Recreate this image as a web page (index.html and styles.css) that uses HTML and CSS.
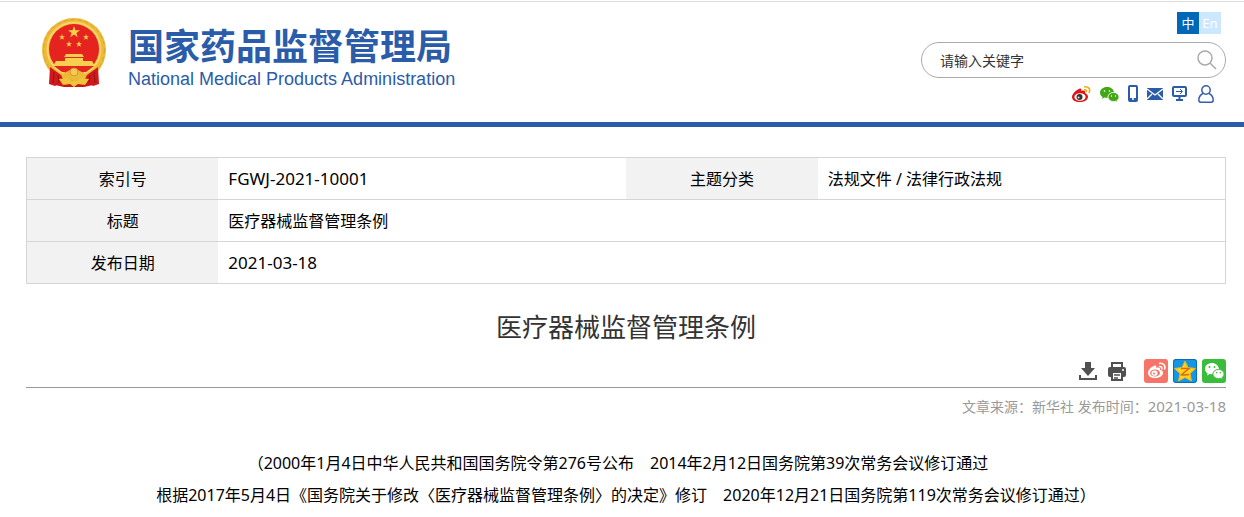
FILE: index.html
```html
<!DOCTYPE html>
<html lang="zh-CN">
<head>
<meta charset="utf-8">
<meta name="viewport" content="width=device-width, initial-scale=1">
<title>医疗器械监督管理条例</title>
<link rel="stylesheet" href="styles.css">
</head>
<body>
<header class="site-header">
  <a class="brand" href="#">
    <svg class="emblem" viewBox="0 0 66 72" aria-hidden="true">
      <path d="M14 52h38v16l-9 2H23l-9-2z" fill="#c9161b"/>
      <circle cx="33" cy="33" r="32" fill="#ecb93a"/>
      <circle cx="33" cy="33" r="30.500" fill="none" stroke="#dfa52c" stroke-dasharray="4 3"/>
      <circle cx="33" cy="32" r="26.500" fill="none" stroke="#f7d566" stroke-width="2"/>
      <circle cx="33" cy="32" r="25" fill="#e5231f"/>
      <g fill="#f5cf4d">
        <path d="m33 9 1.500 4.200h4.500l-3.600 2.700 1.300 4.300-3.700-2.600-3.700 2.600 1.300-4.300-3.600-2.700h4.500z"/>
        <path id="star" d="m21 17 .8 2.200h2.200l-1.800 1.400.7 2.200-1.900-1.300-1.900 1.300.7-2.200-1.800-1.400h2.200z"/>
        <use href="#star" x="24"/><use href="#star" x="7" y="7"/><use href="#star" x="17" y="7"/>
        <path d="M25 37h16l2 3H23zM24 41h18v3H24zM15 44h36l3 5H12z"/>
      </g>
      <path d="M13 49h40l-8 6H21z" fill="#e5231f"/>
      <path d="m9 50 13 7 5-3 6-3 6 3 5 3 13-7-5 8-9 4-10-3-10 3-9-4z" fill="#eeb938"/>
      <path d="m9 50-1 17 6 2 3-2 3 2 3-5-3-6zM57 50l1 17-6 2-3-2-3 2-3-5 3-6z" fill="#cf191b"/>
      <path d="m13 55-1 11m5-8 1 8m35-11 1 11m-5-8-1 8" stroke="#9c1015"/>
      <path d="m18 62 8-1 5 3h4l5-3 8 1-4 6-7-1-4 3-4-3-7 1z" fill="#f0c33b"/>
      <circle cx="33" cy="55" r="4" fill="#f3cb52" stroke="#d19628"/>
    </svg>
    <span class="brand-text">
      <span class="brand-cn">国家药品监督管理局</span>
      <span class="brand-en">National Medical Products Administration</span>
    </span>
  </a>
  <div class="tools">
    <nav class="languages" aria-label="语言">
      <a class="language language-on" href="#">中</a>
      <a class="language" href="#">En</a>
    </nav>
    <form class="search">
      <input class="search-input" type="text" aria-label="搜索" placeholder="请输入关键字">
      <button class="search-button" type="button" aria-label="搜索">
        <svg width="20" height="20" viewBox="0 0 20 20" fill="none" stroke="#aaa" stroke-width="1.500"><circle cx="8" cy="8" r="7"/><path d="m13 13 6 6"/></svg>
      </button>
    </form>
    <nav class="quick-links" aria-label="快捷入口">
      <a class="icon-link" href="#" aria-label="微博"><svg width="19" height="18" viewBox="0 0 19 18"><path d="M7 4c2-1 3 0 2 2 3-1 5 0 4 2 2 1 3 2 3 4 0 3-4 5-8 5-5 0-8-2-8-5 0-3 4-7 7-8z" fill="#df1418"/><ellipse cx="8" cy="12" rx="5.600" ry="3.800" fill="#fff"/><circle cx="7.500" cy="12" r="3" fill="#333"/><circle cx="6.600" cy="12.500" r="1" fill="#ddd"/><path d="M12 2c4-1 7 2 5 6m-5-3c2-1 3 1 2 2" fill="none" stroke="#efaa18" stroke-width="1.600"/></svg></a>
      <a class="icon-link" href="#" aria-label="微信"><svg width="19" height="18" viewBox="0 0 19 18"><path d="M7 2C3 2 0 4.500 0 7.500c0 2 1 3.500 2.700 4.500L2 14l2.500-1.400 3 .4C8 9 11 7 14 7 13.500 4 10.600 2 7 2z" fill="#42a616"/><path d="M13.500 7.500C10.500 7.500 8 9.500 8 12s2.500 4.500 5.500 4.500l2-.3 2 1-.6-1.800c1.300-.8 2.100-2 2.100-3.400 0-2.500-2.500-4.500-5.500-4.500z" fill="#42a616" stroke="#fff" stroke-width=".7"/><g fill="#fff"><circle cx="4.500" cy="6" r=".8"/><circle cx="9.500" cy="6" r=".8"/><circle cx="11.500" cy="11" r=".7"/><circle cx="15.500" cy="11" r=".7"/></g></svg></a>
      <a class="icon-link" href="#" aria-label="移动版"><svg width="10" height="18" viewBox="0 0 10 18"><rect x="1" y="1" width="8" height="15" rx="1" fill="#fff" stroke="#2a5caa" stroke-width="2"/><path d="M1 13h8v3H1z" fill="#2a5caa"/><circle cx="5" cy="14" r="1" fill="#fff"/></svg></a>
      <a class="icon-link" href="#" aria-label="邮箱"><svg width="16" height="18" viewBox="0 0 16 18"><path d="M0 3h16v12H0z" fill="#2a5caa"/><path d="m0 4 8 6 8-6M0 14l5-5m11 5-5-5" fill="none" stroke="#fff" stroke-width="1.300"/></svg></a>
      <a class="icon-link" href="#" aria-label="电脑版"><svg width="17" height="18" viewBox="0 0 17 18" fill="none" stroke="#2a5caa"><rect x="1" y="2" width="13" height="9" rx="1" stroke-width="2"/><path d="M4 6.500h6M8 4l2.500 2.500L8 9"/><path d="M7.500 11v4M4 15h7" stroke-width="2"/></svg></a>
      <a class="icon-link" href="#" aria-label="个人中心"><svg width="17" height="18" viewBox="0 0 17 18" fill="none" stroke="#3a5cad" stroke-width="1.500"><circle cx="8" cy="5" r="4.200"/><path d="M5 8.500C2 10 .8 12 .8 15c0 1.500.7 2.200 2 2.200h10.400c1.300 0 2-.7 2-2.200 0-3-1.200-5-4.200-6.500"/></svg></a>
    </nav>
  </div>
</header>
<main class="content">
  <table class="info">
    <tbody>
      <tr><th scope="row">索引号</th><td><span class="code">FGWJ-2021-10001</span></td><th scope="row">主题分类</th><td>法规文件 / 法律行政法规</td></tr>
      <tr><th scope="row">标题</th><td colspan="3">医疗器械监督管理条例</td></tr>
      <tr><th scope="row">发布日期</th><td colspan="3"><span class="code">2021-03-18</span></td></tr>
    </tbody>
  </table>
  <h1 class="title">医疗器械监督管理条例</h1>
  <div class="actions">
    <button class="action" type="button" aria-label="下载"><svg width="20" height="24" viewBox="0 0 20 24" fill="#505050"><path d="M7 3h6v6h4l-7 8-7-8h4z"/><path d="M2 16v4h16v-4" fill="none" stroke="#505050" stroke-width="2"/></svg></button>
    <button class="action" type="button" aria-label="打印"><svg width="20" height="24" viewBox="0 0 20 24"><path d="M5 8V4h10v4" fill="#fff" stroke="#505050" stroke-width="2"/><rect x="1" y="8" width="18" height="10" rx="2" fill="#505050"/><path d="M5 13h10v8H5z" fill="#fff" stroke="#505050" stroke-width="2"/><path d="M7 16h6m-6 3h4" stroke="#505050" stroke-width="1.500"/><circle cx="16" cy="11" r="1" fill="#fff"/></svg></button>
    <div class="share">
      <a class="share-link share-weibo" href="#" aria-label="分享到微博"><svg width="24" height="24" viewBox="0 0 24 24"><path d="M10 7c2-1 3 0 2 2 3-1 5 0 4 2 2 0 3 1 3 3 0 3-4 5-8 5s-7-2-7-5 3-6 6-7z" fill="#fff"/><ellipse cx="11" cy="14" rx="5" ry="3.500" fill="#f77468"/><ellipse cx="10.500" cy="14.200" rx="3" ry="2.600" fill="#fff"/><circle cx="10" cy="14.500" r="1" fill="#f77468"/><path d="M15 4.500c4-1 7 2 5.500 6M15 7.500c2-.5 3.500 1 2.800 3" fill="none" stroke="#fff" stroke-width="1.500"/></svg></a>
      <a class="share-link share-qzone" href="#" aria-label="分享到QQ空间"><svg width="24" height="24" viewBox="0 0 24 24"><rect x=".5" y=".5" width="23" height="23" rx="2.500" fill="none" stroke="#0b6cb8"/><path d="m12 2 3 6.500 7.500 1-5.500 5L18.500 22 12 18.500 5.500 22 7 14.500l-5.500-5 7.500-1z" fill="#ffd21e" stroke="#f3b21d"/><path d="M8 9.500h8l-7.500 6.200c3 .5 5 .3 7.500-.2" fill="none" stroke="#d76c11" stroke-width="1.500"/></svg></a>
      <a class="share-link share-wechat" href="#" aria-label="分享到微信"><svg width="24" height="24" viewBox="0 0 24 24"><path d="M10 4C6 4 3 6.500 3 9.700c0 2 1 3.500 2.600 4.500L5 16.500l2.600-1.400 2.900.2C11 12 14 10 17 10c-.5-3.500-3.500-6-7-6z" fill="#fff"/><path d="M16.500 10.500c-3.200 0-5.500 2-5.500 4.500s2.300 4.500 5.500 4.500l2-.3 2.200 1.100-.6-1.900c1.200-.8 1.900-2 1.900-3.400 0-2.500-2.300-4.500-5.500-4.500z" fill="#fff" stroke="#3bbd3c" stroke-width=".8"/><g fill="#3bbd3c"><circle cx="7.500" cy="8" r="1"/><circle cx="12.500" cy="8" r="1"/><circle cx="14.700" cy="13.800" r=".8"/><circle cx="18.300" cy="13.800" r=".8"/></g></svg></a>
    </div>
  </div>
  <p class="meta">文章来源：新华社 发布时间：<span class="meta-date">2021-03-18</span></p>
  <p class="preamble">（2000年1月4日中华人民共和国国务院令第276号公布　2014年2月12日国务院第39次常务会议修订通过　&#8288;<br>根据2017年5月4日《国务院关于修改〈医疗器械监督管理条例〉的决定》修订　2020年12月21日国务院第119次常务会议修订通过）</p>
</main>
</body>
</html>
```

FILE: styles.css
```css
* {
  box-sizing: border-box;
}

body {
  margin: 0;
  padding-top: 1px;
  background: #fff;
  color: #000;
  font-family: "Noto Sans", "Noto Sans CJK SC", sans-serif;
  font-size: 16px;
}

a {
  color: inherit;
  text-decoration: none;
}

button {
  padding: 0;
  border: 0;
  background: none;
}

svg {
  display: block;
}

.site-header {
  display: flex;
  justify-content: space-between;
  align-items: flex-start;
  padding: 10px 18px 19px 41px;
  border-top: 1px solid #ddd;
  border-bottom: 5px solid #2a5caa;
}

.brand {
  display: flex;
  gap: 21px;
  padding-top: 5px;
  color: #2a5caa;
}

.emblem {
  width: 66px;
  height: 72px;
}

.brand-text {
  display: flex;
  flex-direction: column;
  padding-top: 4px;
}

.brand-cn {
  font-family: "Noto Sans CJK SC", sans-serif;
  font-size: 36px;
  font-weight: 700;
  line-height: 46px;
}

.brand-en {
  font-family: "Liberation Sans", sans-serif;
  font-size: 18px;
  line-height: 24px;
}

.tools {
  display: flex;
  flex-direction: column;
  align-items: flex-end;
  width: 305px;
}

.languages {
  display: flex;
  padding-right: 5px;
}

.language {
  width: 22px;
  background: #cce8ff;
  color: #fff;
  font-size: 13px;
  line-height: 22px;
  text-align: center;
}

.language-on {
  background: #0068b7;
}

.search {
  display: flex;
  align-items: center;
  width: 100%;
  height: 36px;
  margin: 8px 0 7px;
  padding: 0 8px 0 18px;
  border: 1px solid #aaa;
  border-radius: 18px;
}

.search-input {
  flex: 1;
  min-width: 0;
  padding: 0;
  border: 0;
  outline: 0;
  background: none;
  font: 14px "Noto Sans CJK SC", sans-serif;
}

.search-input::placeholder {
  color: #333;
  opacity: 1;
}

.quick-links {
  display: flex;
  gap: 9px;
  padding-right: 11px;
}

.content {
  padding: 30px 18px 0 26px;
}

.info {
  width: 100%;
  border: 1px solid #d5d5d5;
  border-collapse: collapse;
  table-layout: fixed;
}

.info tr {
  border-bottom: 1px solid #d5d5d5;
}

.info th,
.info td {
  height: 42px;
  padding: 0 10px;
  line-height: 24px;
}

.info th {
  width: 16%;
  background: #f2f2f2;
  font-weight: 400;
}

.info td {
  width: 34%;
}

.code {
  font-size: 17px;
}

.title {
  margin: 24px 0 12px;
  color: #333;
  font-size: 26px;
  font-weight: 400;
  line-height: 39px;
  text-align: center;
}

.actions {
  display: flex;
  justify-content: flex-end;
  gap: 9px;
  padding-bottom: 4px;
  border-bottom: 1px solid #999;
}

.share {
  display: flex;
  gap: 5px;
  padding-left: 8px;
}

.share-link {
  border-radius: 3px;
}

.share-weibo {
  background: #f77468;
}

.share-qzone {
  background: #1296e6;
}

.share-wechat {
  background: #3bbd3c;
}

.meta {
  margin: 6px 0 0;
  color: #999;
  font-size: 14px;
  line-height: 24px;
  text-align: right;
}

.meta-date {
  font-size: 15px;
}

.preamble {
  margin: 28px 0 0;
  line-height: 32px;
  text-align: center;
}
```
